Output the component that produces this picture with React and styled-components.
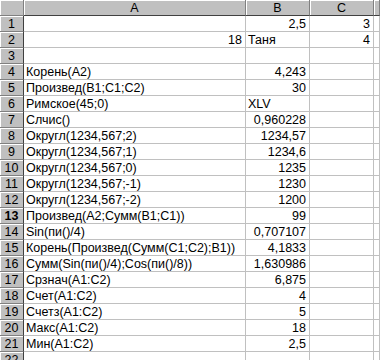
import { createGlobalStyle, styled } from "styled-components";

const GlobalStyle = createGlobalStyle`
  html, body {
    margin: 0;
    padding: 0;
    background: #ffffff;
    overflow: hidden;
  }
  body {
    font-family: "Liberation Sans", Arial, sans-serif;
  }
`;

// columns: row header, A, B, C, D (rest)
const rows = [
  [{ v: "" }, { v: "2,5", r: true }, { v: "3", r: true }],
  [{ v: "18", r: true }, { v: "Таня" }, { v: "4", r: true }],
  [{ v: "" }, { v: "" }, { v: "" }],
  [{ v: "Корень(A2)" }, { v: "4,243", r: true }],
  [{ v: "Произвед(B1;C1;C2)" }, { v: "30", r: true }],
  [{ v: "Римское(45;0)" }, { v: "XLV" }],
  [{ v: "Слчис()" }, { v: "0,960228", r: true }],
  [{ v: "Округл(1234,567;2)" }, { v: "1234,57", r: true }],
  [{ v: "Округл(1234,567;1)" }, { v: "1234,6", r: true }],
  [{ v: "Округл(1234,567;0)" }, { v: "1235", r: true }],
  [{ v: "Округл(1234,567;-1)" }, { v: "1230", r: true }],
  [{ v: "Округл(1234,567;-2)" }, { v: "1200", r: true }],
  [{ v: "Произвед(A2;Сумм(B1;C1))" }, { v: "99", r: true }],
  [{ v: "Sin(пи()/4)" }, { v: "0,707107", r: true }],
  [{ v: "Корень(Произвед(Сумм(C1;C2);B1))" }, { v: "4,1833", r: true }],
  [{ v: "Сумм(Sin(пи()/4);Cos(пи()/8))" }, { v: "1,630986", r: true }],
  [{ v: "Срзнач(A1:C2)" }, { v: "6,875", r: true }],
  [{ v: "Счет(A1:C2)" }, { v: "4", r: true }],
  [{ v: "Счетз(A1:C2)" }, { v: "5", r: true }],
  [{ v: "Макс(A1:C2)" }, { v: "18", r: true }],
  [{ v: "Мин(A1:C2)" }, { v: "2,5", r: true }],
  [],
];

const activeRow = 13;

export default function App() {
  return (
    <>
      <GlobalStyle />
      <Sheet>
        <Corner />
        <ColHeader>A</ColHeader>
        <ColHeader>B</ColHeader>
        <ColHeader>C</ColHeader>
        <ColHeader />
        {rows.map((row, i) => {
          const cells = [0, 1, 2].map((c) => row[c] || { v: "" });
          return (
            <Row key={i}>
              <RowHeader $active={i + 1 === activeRow}>{i + 1}</RowHeader>
              {cells.map((cell, c) => (
                <Cell key={c} $right={cell.r}>
                  {cell.v}
                </Cell>
              ))}
              <Cell />
            </Row>
          );
        })}
      </Sheet>
    </>
  );
}

const Sheet = styled.div`
  display: grid;
  grid-template-columns: 24px 222px 64px 64px 1fr;
  grid-auto-rows: 16px;
  width: 380px;
  font-size: 12.5px;
  color: #000000;
`;

const Row = styled.div`
  display: contents;
`;

const HeaderBase = styled.div`
  box-sizing: border-box;
  background: #c0c0c0;
  border-right: 1px solid #808080;
  border-bottom: 1px solid #808080;
  box-shadow: inset 1px 1px 0 #ffffff;
  text-align: center;
  line-height: 16px;
  overflow: hidden;
  white-space: nowrap;
`;

const Corner = styled(HeaderBase)``;

const ColHeader = styled(HeaderBase)`
  border-bottom: 1px solid #404040;
`;

const RowHeader = styled(HeaderBase)`
  border-right: 1px solid #404040;
  padding-top: 1px;
  line-height: 14px;
  font-weight: ${(p) => (p.$active ? 700 : 400)};
`;

const Cell = styled.div`
  box-sizing: border-box;
  border-right: 1px solid #c0c0c0;
  border-bottom: 1px solid #c0c0c0;
  padding: 1px 3px 0 2px;
  line-height: 14px;
  white-space: nowrap;
  overflow: hidden;
  text-align: ${(p) => (p.$right ? "right" : "left")};
`;
